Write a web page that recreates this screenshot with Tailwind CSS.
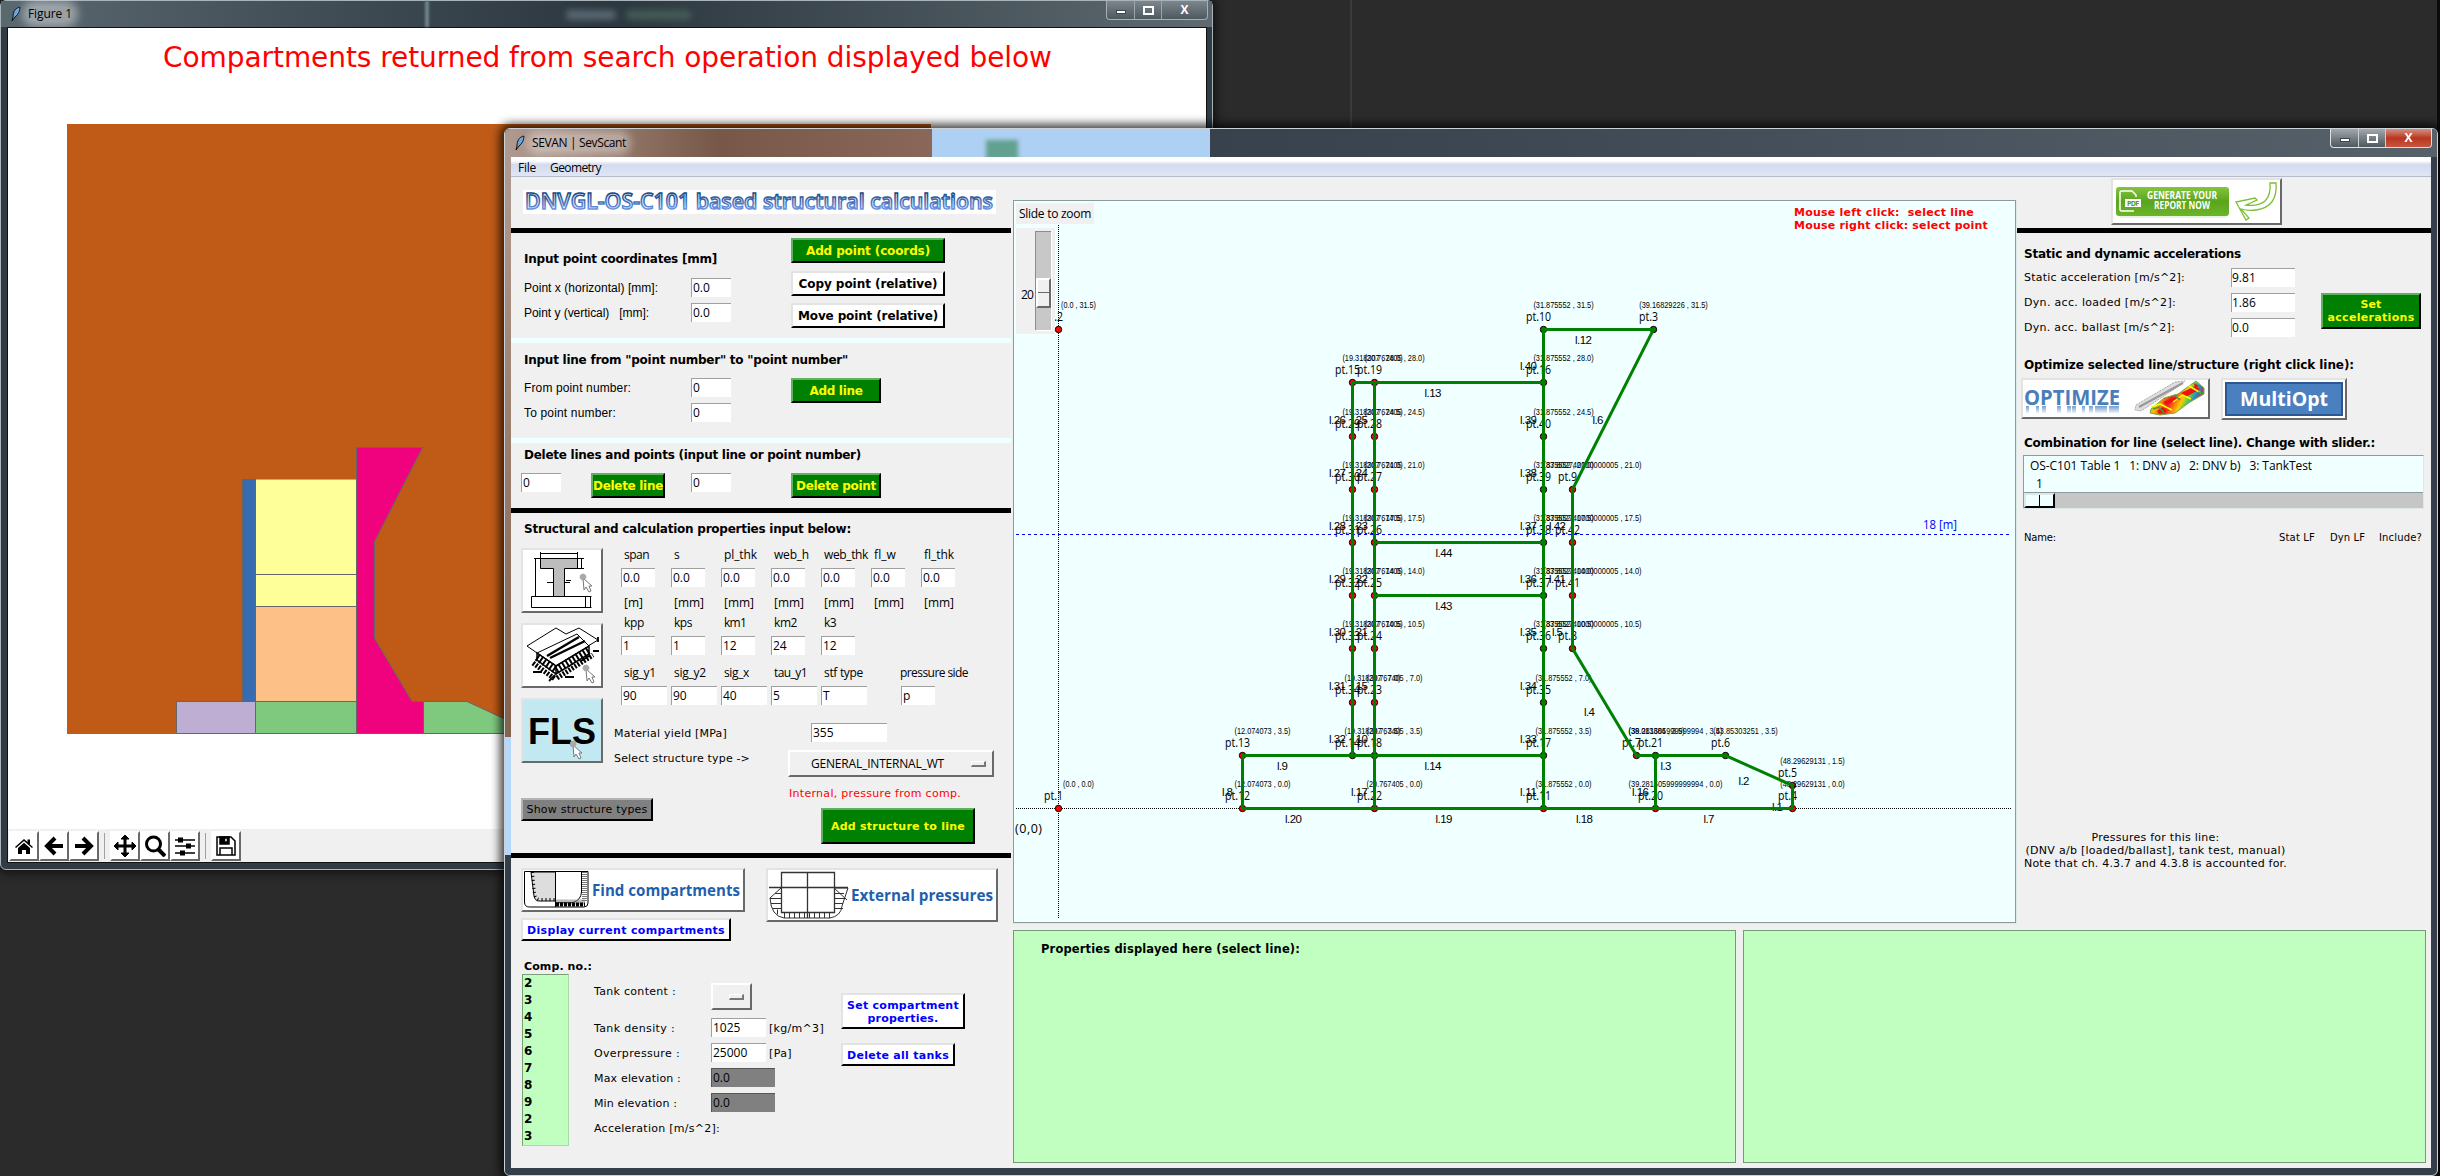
<!DOCTYPE html>
<html lang="en">
<head>
<meta charset="utf-8">
<title>SEVAN | SevScant</title>
<script src="https://cdn.jsdelivr.net/npm/@tailwindcss/browser@4"></script>
</head>
<body class="relative h-[1176px] w-[2440px] overflow-hidden bg-[#2b2b2b] text-black">

<!-- desktop edges -->
<div class="absolute left-[1350px] top-0 h-[128px] w-[2px] bg-[#3a3a3a]"></div>
<div class="absolute right-0 top-0 h-full w-[3px] bg-[#0c0c0c]"></div>

<!-- Figure window -->
<section class="absolute left-0 top-0 flex h-[870px] w-[1213px] flex-col rounded-[6px] border border-[#a9b4ba] bg-[#303b43] px-[6px] shadow-[0_0_10px_3px_rgba(0,0,0,0.6)]">
  <header class="-mx-[6px] flex h-[26px] shrink-0 items-start bg-linear-to-r from-[#5a6870] via-[#2c373f] to-[#5e6a70]">
    <svg class="ml-[9px] mt-[5px]" width="12" height="16" viewBox="0 0 12 16"><path d="M10 1C5 2 3 6 3 11l-1 4 3-4c3-2 5-6 5-10z" fill="#6aa5e0" stroke="#111" stroke-width="1"/></svg>
    <span data-w="44" class="ml-[6px] mt-[5px] whitespace-nowrap rounded-full bg-white/40 font-['Open_Sans',sans-serif] text-[12px] leading-[16px] shadow-[0_0_8px_6px_rgba(255,255,255,0.4)]">Figure 1</span>
    <div class="ml-[353px] h-[26px] w-[4px] bg-[#6f828c] blur-[1px]"></div>
    <div class="ml-[137px] mt-[9px] h-[10px] w-[50px] rounded bg-[#71838f]/60 blur-[3px]"></div>
    <div class="ml-[10px] mt-[9px] h-[10px] w-[65px] rounded bg-[#4f7060]/60 blur-[3px]"></div>
    <div class="ml-auto mr-[4px] flex h-[19px] w-[102px] rounded-b-[4px] border border-t-0 border-[#a6afb4] bg-linear-to-b from-[#7d878d] to-[#4d585f]">
      <div class="flex w-[28px] items-center justify-center border-r border-[#9ca5ab]"><i class="mt-[3px] h-[4px] w-[10px] border border-[#444] bg-white"></i></div>
      <div class="flex w-[27px] items-center justify-center border-r border-[#9ca5ab]"><i class="h-[9px] w-[11px] border-2 border-white"></i></div>
      <b class="flex flex-1 items-center justify-center font-['Open_Sans',sans-serif] text-[12px] leading-none text-white">X</b>
    </div>
  </header>
  <div class="flex min-h-0 w-[1200px] flex-1 flex-col border border-[#111] bg-white">
    <svg class="block shrink-0" width="1198" height="801" viewBox="8 28 1198 801">
      <text x="163" y="67" textLength="889" fill="#ff0000" font-family="DejaVu Sans, sans-serif" font-size="28">Compartments returned from search operation displayed below</text>
      <rect x="67" y="124" width="864" height="610" fill="#bf5b17"/>
      <g stroke="#666" stroke-width="1">
        <path d="M176.500 701.500H255.500V733.500H176.500z" fill="#beaed4"/>
        <path d="M242.500 479V701.500H255.500V479z" fill="#386cb0"/>
        <path d="M255.500 479V606.500H356.500V479z" fill="#ffff99" />
        <path d="M255.500 574.500H356.500"/>
        <path d="M255.500 606.500H356.500V701.500H255.500z" fill="#fdc086"/>
        <path d="M255.500 701.500H356.500V733.500H255.500z" fill="#7fc97f"/>
        <path d="M356.500 447.500H422.500L374.500 541.500V638.500L412 701.500H423.500V733.500H356.500z" fill="#f0027f"/>
        <path d="M423.500 701.500H467L520 726V733.500H423.500z" fill="#7fc97f"/>
      </g>
      <path d="M242 478.500H356" stroke="#bf5b17"/>
    </svg>
    <nav class="flex flex-1 items-start bg-[#f0f0f0] pl-[1px] pt-[2px] [&_i]:mt-[2px] [&_i]:h-[26px] [&_i]:w-px [&_i]:bg-[#a0a0a0] [&_button]:flex [&_button]:size-[30px] [&_button]:items-center [&_button]:justify-center [&_button]:border-2 [&_button]:border-b-[#696969] [&_button]:border-l-white [&_button]:border-r-[#696969] [&_button]:border-t-white [&_button]:bg-white">
      <button><svg width="22" height="20" viewBox="0 0 22 20"><path d="M2 11L11 3l3.500 3V3.500H17V8.500L20 11l-1 1-8-7-8 7z"/><path d="M5 12l6-5.300L17 12v6h-4v-4H9v4H5z"/></svg></button>
      <button><svg width="22" height="20" viewBox="0 0 22 20" fill="none" stroke="#000" stroke-width="4"><path d="M20 10H5M12 2L4 10l8 8"/></svg></button>
      <button><svg width="22" height="20" viewBox="0 0 22 20" fill="none" stroke="#000" stroke-width="4"><path d="M2 10H17M10 2l8 8-8 8"/></svg></button>
      <i class="ml-[5px] mr-[5px]"></i>
      <button><svg width="24" height="24" viewBox="0 0 24 24"><path d="M12 1l4 4h-3v6h6V8l4 4-4 4v-3h-6v6h3l-4 4-4-4h3v-6H5v3l-4-4 4-4v3h6V5H8z" stroke="#000"/></svg></button>
      <button><svg width="22" height="22" viewBox="0 0 22 22" fill="none" stroke="#000" stroke-width="3"><circle cx="9.500" cy="9" r="7"/><path d="M14.500 14.500L21 21" stroke-width="4"/></svg></button>
      <button><svg width="22" height="20" viewBox="0 0 22 20"><path d="M1 4h20M1 10h20M1 17h20" stroke="#000" stroke-width="1.500"/><path d="M4 1.500h5v5H4zM12 7.500h5v5h-5zM6 14.500h5v5H6z"/></svg></button>
      <i class="ml-[5px] mr-[5px]"></i>
      <button><svg width="20" height="20" viewBox="0 0 20 20" fill="none" stroke="#000" stroke-width="1.500"><path d="M1 1H15l4 4V19H1z"/><path d="M4 1h9v7H4z" fill="#000"/><path d="M8.500 2h3v4h-3z" fill="#fff"/><path d="M4 19v-7h12v7"/></svg></button>
    </nav>
  </div>
  <div class="h-[6px] shrink-0"></div>
</section>

<!-- Main window -->
<section class="absolute left-[504px] top-[128px] flex h-[1048px] w-[1934px] flex-col overflow-hidden rounded-[6px] border border-[#ccd2d6] bg-[#333e49] shadow-[0_0_10px_4px_rgba(0,0,0,0.75)]">
  <header class="flex h-[28px] shrink-0 items-start bg-linear-to-r from-[#2a353f] via-[#3c4752] to-[#57616a]">
    <div class="flex h-[28px] w-[427px] items-start bg-linear-to-r from-[#b09a90] via-[#775848] to-[#8a6759]">
      <svg class="ml-[9px] mt-[6px]" width="12" height="16" viewBox="0 0 12 16"><path d="M10 1C5 2 3 6 3 11l-1 4 3-4c3-2 5-6 5-10z" fill="#6aa5e0" stroke="#111" stroke-width="1"/></svg>
      <span data-w="94" class="ml-[6px] mt-[6px] whitespace-nowrap rounded-full bg-white/35 font-['Open_Sans',sans-serif] text-[12px] leading-[16px] shadow-[0_0_8px_5px_rgba(255,255,255,0.35)]">SEVAN | SevScant</span>
    </div>
    <div class="h-[28px] w-[278px] overflow-hidden bg-[#aed0f3] pl-[54px] pt-[11px]"><div class="h-[20px] w-[32px] bg-[#62a08f] blur-[2px]"></div></div>
    <div class="ml-auto mr-[5px] flex h-[19px] w-[102px] rounded-b-[4px] border border-t-0 border-[#dfe3e6] bg-linear-to-b from-[#a2a9ae] to-[#4d585f]">
      <div class="flex w-[28px] items-center justify-center border-r border-[#ccd0d3]"><i class="mt-[3px] h-[4px] w-[10px] border border-[#444] bg-white"></i></div>
      <div class="flex w-[27px] items-center justify-center border-r border-[#ccd0d3]"><i class="h-[9px] w-[11px] border-2 border-white"></i></div>
      <b class="flex flex-1 items-center justify-center rounded-br-[4px] bg-linear-to-b from-[#d28f80] via-[#b8351f] to-[#c9553f] font-['Open_Sans',sans-serif] text-[12px] leading-none text-white">X</b>
    </div>
  </header>
  <div class="flex min-h-0 flex-1">
    <div class="h-full w-[6px] shrink-0 bg-linear-to-b from-[#b09a90] from-0% via-[#84634f] via-55% to-[#84634f] to-58%"><div class="h-[580px]"></div><div class="h-[118px] bg-[#b5d7fb]"></div><div class="h-[340px] bg-[#333e49]"></div></div>
    <main class="flex h-[1011px] w-[1920px] shrink-0 flex-col bg-[#f0f0f0]">
      <nav class="flex h-[20px] shrink-0 items-center border-b border-[#b6bccc] bg-linear-to-b from-white from-20% via-[#d4dbee] via-40% to-[#e1e6f6] pt-[3px] font-['Open_Sans',sans-serif] text-[12px] leading-none whitespace-nowrap">
        <span data-w="18" class="ml-[7px]">File</span><span data-w="51" class="ml-[14px]">Geometry</span>
      </nav>
      <div class="flex min-h-0 flex-1">

        <!-- input column -->
        <div class="flex w-[502px] shrink-0 flex-col whitespace-nowrap font-['Open_Sans',sans-serif] text-[12px] leading-none [&_button]:flex [&_button]:shrink-0 [&_button]:items-center [&_button]:justify-center [&_h2]:flex [&_h2]:h-[20px] [&_h2]:items-center [&_h2]:pt-[2px] [&_h2]:font-['DejaVu_Sans'] [&_h2]:text-[12px] [&_h2]:font-bold [&_label]:block [&_label]:h-[16px] [&_label]:shrink-0 [&_label]:leading-[17px] [&_output]:flex [&_output]:h-[19px] [&_output]:shrink-0 [&_output]:items-center [&_output]:border-l-[1.500px] [&_output]:border-t-[1.500px] [&_output]:border-[#a0a0a0] [&_output]:bg-white [&_output]:pl-[1px]">
          <div class="h-[51px] pl-[12px] pt-[13px]">
            <svg class="block bg-white" width="473" height="24" viewBox="0 0 473 24"><defs><linearGradient id="wa" x1="0" y1="0" x2="0" y2="1"><stop offset="0.200" stop-color="#123f7c"/><stop offset="0.850" stop-color="#6f98e8"/></linearGradient></defs><text x="2" y="18.500" textLength="468" lengthAdjust="spacingAndGlyphs" font-family="Open Sans, sans-serif" font-weight="600" font-size="21.500" fill="#eef3fc" stroke="url(#wa)" stroke-width="1.500">DNVGL-OS-C101 based structural calculations</text></svg>
          </div>
          <div class="h-[5px] w-[500px] bg-black"></div>

          <div class="flex h-[105px] font-['Liberation_Sans',sans-serif]">
            <div class="w-[280px] pl-[13px] pt-[15px]">
              <h2><span data-w="193">Input point coordinates [mm]</span></h2>
              <div class="mt-[10px] flex items-center"><label class="w-[167px]"><span data-w="134">Point x (horizontal) [mm]:</span></label><output class="w-[40px] font-['Open_Sans']">0.0</output></div>
              <div class="mt-[6px] flex items-center"><label class="w-[167px] whitespace-pre"><span data-w="125">Point y (vertical)   [mm]:</span></label><output class="w-[40px] font-['Open_Sans']">0.0</output></div>
            </div>
            <div class="flex flex-col pt-[5px] font-['DejaVu_Sans'] text-[12px] font-bold">
              <button class="h-[25px] w-[154px] border-2 border-b-black border-l-[#5fb25f] border-r-black border-t-[#5fb25f] bg-[#008000] text-[#ffff00]"><span data-w="124">Add point (coords)</span></button>
              <button class="mt-[8px] h-[25px] w-[154px] border-2 border-b-black border-l-[#e3e3e3] border-r-black border-t-[#e3e3e3] bg-white"><span data-w="139">Copy point (relative)</span></button>
              <button class="mt-[7px] h-[25px] w-[154px] border-2 border-b-black border-l-[#e3e3e3] border-r-black border-t-[#e3e3e3] bg-white"><span data-w="140">Move point (relative)</span></button>
            </div>
          </div>
          <div class="h-[5px] w-[500px] bg-[#f0ffff]"></div>

          <div class="flex h-[95px] font-['Liberation_Sans',sans-serif]">
            <div class="w-[280px] pl-[13px] pt-[6px]">
              <h2><span data-w="324">Input line from "point number" to "point number"</span></h2>
              <div class="mt-[9px] flex items-center"><label class="w-[167px]"><span data-w="107">From point number:</span></label><output class="w-[40px] font-['Open_Sans']">0</output></div>
              <div class="mt-[6px] flex items-center"><label class="w-[167px]"><span data-w="92">To point number:</span></label><output class="w-[40px] font-['Open_Sans']">0</output></div>
            </div>
            <button class="mt-[35px] h-[25px] w-[90px] border-2 border-b-black border-l-[#5fb25f] border-r-black border-t-[#5fb25f] bg-[#008000] font-['DejaVu_Sans'] text-[12px] font-bold text-[#ffff00]"><span data-w="53">Add line</span></button>
          </div>
          <div class="h-[5px] w-[500px] bg-[#f0ffff]"></div>

          <div class="h-[65px] pt-px">
            <h2 class="pl-[13px]"><span data-w="337">Delete lines and points (input line or point number)</span></h2>
            <div class="mt-[9px] flex items-start pl-[10px]">
              <output class="mr-[30px] w-[40px]">0</output>
              <button class="mr-[26px] h-[25px] w-[74px] border-2 border-b-black border-l-[#5fb25f] border-r-black border-t-[#5fb25f] bg-[#008000] font-['DejaVu_Sans'] text-[12px] font-bold text-[#ffff00]"><span data-w="70">Delete line</span></button>
              <output class="mr-[60px] w-[40px]">0</output>
              <button class="h-[25px] w-[90px] border-2 border-b-black border-l-[#5fb25f] border-r-black border-t-[#5fb25f] bg-[#008000] font-['DejaVu_Sans'] text-[12px] font-bold text-[#ffff00]"><span data-w="80">Delete point</span></button>
            </div>
          </div>
          <div class="h-[5px] w-[500px] bg-black"></div>

          <div class="h-[340px] pt-[5px]">
            <h2 class="pl-[13px]"><span data-w="327">Structural and calculation properties input below:</span></h2>
            <div class="flex">
              <div class="flex w-[103px] shrink-0 flex-col pl-[10px] pt-[10px]">
                <button class="h-[65px] w-[82px] border-2 border-b-[#696969] border-l-[#e3e3e3] border-r-[#696969] border-t-[#e3e3e3] bg-white">
                  <svg width="78" height="61" viewBox="0 0 78 61" fill="none" stroke="#000"><path d="M17.500 8.500H54.500V18.500H41.500V46.500H30.500V18.500H17.500z" fill="#bdbdbd"/><path d="M8.500 46.500H68.500M8.500 57.500H68.500M8.500 46.500V57.500M62.500 46.500V57.500M67.500 46.500V57.500M17.500 2V8M54.500 2V8M17.500 3.500H54.500M11 8.500H61M12.500 8V46M58.500 8V18.500M54 18.500H61M24 32.500h6M41 32.500h6M43 30.500h5"/><path d="M60 28l1 12 2-3 3 5 2-1-2-5h3z" fill="#fff" stroke="#777"/><circle cx="60" cy="27" r="3" fill="#aaa" stroke="#999" stroke-dasharray="1 1"/></svg>
                </button>
                <button class="mt-[10px] h-[65px] w-[82px] border-2 border-b-[#696969] border-l-[#e3e3e3] border-r-[#696969] border-t-[#e3e3e3] bg-white">
                  <svg width="78" height="61" viewBox="0 0 78 61" fill="none" stroke="#000"><path d="M4 21L33 3l10 6M4 21l10 7M43 9L56 3l19 12-10 6"/><path d="M14 28L54 9l12 12-33 20z" fill="#fff"/><path d="M14 28l19 13v8L14 35zM33 41l33-20v8L33 49z" stroke-width="1.500"/><path d="M24 31L56 12M27 33L62 16" stroke-width="2.500"/><path d="M14 32l19 13M33 45l33-20" stroke-width="8" stroke-dasharray="2 2"/><path d="M10 38l22 16M34 53l36-23" stroke-width="5" stroke-dasharray="2 1.500"/><path d="M10 47h9M58 36l8-5M26 56l6-6M42 52h9M70 26h6M75 12v5" stroke-width="1.800"/><path d="M63 44l1 12 2-3 3 5 2-1-2-5h3z" fill="#fff" stroke="#777"/><circle cx="63" cy="43" r="3" fill="#aaa" stroke="#999" stroke-dasharray="1 1"/></svg>
                </button>
                <button class="mt-[10px] h-[65px] w-[82px] border-2 border-b-[#696969] border-l-[#e3e3e3] border-r-[#696969] border-t-[#e3e3e3] bg-[#c2e9f2]">
                  <svg width="78" height="61" viewBox="0 0 78 61"><text x="5" y="43.500" textLength="68" lengthAdjust="spacingAndGlyphs" font-family="Liberation Sans, sans-serif" font-weight="bold" font-size="37">FLS</text><path d="M50 45l1 12 2-3 3 5 2-1-2-5h3z" fill="#fff" stroke="#777"/><circle cx="50" cy="44" r="3" fill="#aaa" stroke="#999" stroke-dasharray="1 1"/></svg>
                </button>
                <button class="mt-[35px] h-[23px] w-[132px] border-2 border-b-black border-l-[#b4b4b4] border-r-black border-t-[#b4b4b4] bg-[#808080] font-['DejaVu_Sans'] text-[11px]"><span data-w="121">Show structure types</span></button>
              </div>
              <div class="ml-[10px] w-0 shrink-0 grow pt-[8px] text-[12px]">
                <div class="flex [&_label]:w-[50px]"><label><span data-w="25">span</span></label><label>s</label><label><span data-w="33">pl_thk</span></label><label><span data-w="35">web_h</span></label><label><span data-w="44">web_thk</span></label><label><span data-w="22">fl_w</span></label><label><span data-w="30">fl_thk</span></label></div>
                <div class="-ml-[3px] mt-[6px] flex gap-[16px] [&_output]:w-[34px]"><output>0.0</output><output>0.0</output><output>0.0</output><output>0.0</output><output>0.0</output><output>0.0</output><output>0.0</output></div>
                <div class="mt-[7px] flex [&_label]:w-[50px]"><label><span data-w="19">[m]</span></label><label><span data-w="30">[mm]</span></label><label><span data-w="30">[mm]</span></label><label><span data-w="30">[mm]</span></label><label><span data-w="30">[mm]</span></label><label><span data-w="30">[mm]</span></label><label><span data-w="30">[mm]</span></label></div>
                <div class="mt-[4px] flex [&_label]:w-[50px]"><label><span data-w="20">kpp</span></label><label><span data-w="18">kps</span></label><label><span data-w="22">km1</span></label><label><span data-w="23">km2</span></label><label><span data-w="12">k3</span></label></div>
                <div class="-ml-[3px] mt-[6px] flex gap-[16px] [&_output]:w-[34px]"><output>1</output><output>1</output><output>12</output><output>24</output><output>12</output></div>
                <div class="mt-[9px] flex [&_label]:w-[50px]"><label><span data-w="32">sig_y1</span></label><label><span data-w="32">sig_y2</span></label><label><span data-w="25">sig_x</span></label><label><span data-w="33">tau_y1</span></label><label><span data-w="39">stf type</span></label><label class="ml-[26px]"><span data-w="68">pressure side</span></label></div>
                <div class="-ml-[3px] mt-[6px] flex gap-[4px]"><output class="w-[46px]">90</output><output class="w-[46px]">90</output><output class="w-[46px]">40</output><output class="w-[46px]">5</output><output class="w-[46px]">T</output><output class="ml-[30px] w-[34px]">p</output></div>
                <div class="-ml-[10px] mt-[18px] flex items-center"><label class="w-[197px] font-['DejaVu_Sans'] text-[11px]"><span data-w="113">Material yield [MPa]</span></label><output class="w-[76px]">355</output></div>
                <div class="-ml-[10px] mt-[8px] flex items-start"><label class="w-[174px] font-['DejaVu_Sans'] text-[11px]"><span data-w="136">Select structure type -&gt;</span></label>
                  <div class="flex h-[27px] w-[206px] shrink-0 items-center border-2 border-b-[#696969] border-l-[#fff] border-r-[#696969] border-t-[#fff] pl-[21px]"><span data-w="133">GENERAL_INTERNAL_WT</span><i class="ml-[27px] h-[6px] w-[15px] border-b-2 border-l border-r-2 border-t border-b-[#777] border-l-white border-r-[#777] border-t-white"></i></div>
                </div>
                <label class="ml-[165px] mt-[8px] font-['DejaVu_Sans'] text-[11px] text-[#ff0000]"><span data-w="172">Internal, pressure from comp.</span></label>
                <button class="ml-[197px] mt-[7px] h-[36px] w-[154px] border-2 border-b-black border-l-[#5fb25f] border-r-black border-t-[#5fb25f] bg-[#008000] font-['DejaVu_Sans'] text-[11px] font-bold text-[#ffff00]"><span data-w="134">Add structure to line</span></button>
              </div>
            </div>
          </div>
          <div class="h-[5px] w-[500px] shrink-0 bg-black"></div>

          <div class="flex h-[98px] shrink-0 pl-[10px] pt-[10px]">
            <div class="w-[245px]">
              <button class="h-[44px] w-[224px] border-2 border-b-[#696969] border-l-[#e3e3e3] border-r-[#696969] border-t-[#e3e3e3] bg-white">
                <svg width="220" height="40" viewBox="0 0 220 40" fill="none" stroke="#000"><path d="M1.500 1.500V32q0 5 5 5H61q4 0 4-4V1.500z"/><path d="M8 2l3 24q1 5 5 5H32.500V2z" fill="#ddd"/><path d="M32.500 1.500V37M32.500 32.500H50Q58 30 58.500 22V2"/><path d="M9.500 2l2 22q1 5 5 5.500H32" stroke-width="3" stroke-dasharray="1 3"/><path d="M61.500 2V32H33" stroke="#777" stroke-width="5" stroke-dasharray="1 1"/><path d="M33 34.500H62" stroke-width="4" stroke-dasharray="3 1"/><text x="69" y="25.500" textLength="148" lengthAdjust="spacingAndGlyphs" font-family="Open Sans, sans-serif" font-weight="bold" font-size="15.500" fill="#1f5fae" stroke="none">Find compartments</text></svg>
              </button>
              <button class="mt-[6px] h-[23px] w-[210px] border-2 border-b-black border-l-[#e3e3e3] border-r-black border-t-[#e3e3e3] bg-white pt-px font-['DejaVu_Sans'] text-[11px] font-bold text-[#0000ff]"><span data-w="198">Display current compartments</span></button>
            </div>
            <button class="h-[54px] w-[232px] border-2 border-b-[#696969] border-l-[#e3e3e3] border-r-[#696969] border-t-[#e3e3e3] bg-white">
              <svg width="228" height="50" viewBox="0 0 228 50" fill="none" stroke="#333"><path d="M13.500 2.500H66.500V42.500H13.500zM39.500 2.500V48M1 17.500H80" stroke-width="1.300"/><path d="M13 18L2 28Q3 46 16 48H62Q73 46 74 36L80 18H66L79 30"/><path d="M2 28.500h11M3 33.500h10M5 38.500h8M67 23.500h9M67 28.500h10M67 33.500h8M67 38.500h8M7 23.500h6"/><path d="M9 42l4 0M16 45.500H62" stroke-width="5" stroke-dasharray="1 4"/><text x="83" y="31" textLength="142" lengthAdjust="spacingAndGlyphs" font-family="Open Sans, sans-serif" font-weight="bold" font-size="15.500" fill="#1f5fae" stroke="none">External pressures</text></svg>
            </button>
          </div>
          <div class="flex h-[18px] shrink-0 items-center pl-[13px] pt-[2px] font-['DejaVu_Sans'] text-[11px] font-bold"><span data-w="68">Comp. no.:</span></div>
          <div class="flex items-start font-['DejaVu_Sans'] text-[11px]">
            <div class="ml-[11px] mr-[25px] h-[172px] w-[47px] shrink-0 border border-b-[#a6dba6] border-l-[#77a077] border-r-[#a6dba6] border-t-[#77a077] bg-[#c1ffc1] pl-px text-[12px] font-bold leading-[17px]"><div>2</div><div>3</div><div>4</div><div>5</div><div>6</div><div>7</div><div>8</div><div>9</div><div>2</div><div>3</div></div>
            <div class="w-[247px] shrink-0 pt-[9px] [&_label]:w-[117px]">
              <div class="flex h-[27px]"><label><span data-w="82">Tank content :</span></label><div class="flex w-[41px] items-center border-2 border-b-[#696969] border-l-[#fff] border-r-[#696969] border-t-[#fff] pl-[16px]"><i class="h-[6px] w-[15px] border-b-2 border-l border-r-2 border-t border-b-[#777] border-l-white border-r-[#777] border-t-white"></i></div></div>
              <div class="mt-[8px] flex items-center"><label><span data-w="81">Tank density :</span></label><output class="w-[55px] font-['Open_Sans'] text-[12px]">1025</output><span class="ml-[3px] pt-px" data-w="55">[kg/m^3]</span></div>
              <div class="mt-[6px] flex items-center"><label><span data-w="86">Overpressure :</span></label><output class="w-[55px] font-['Open_Sans'] text-[12px]">25000</output><span class="ml-[3px] pt-px" data-w="23">[Pa]</span></div>
              <div class="mt-[6px] flex items-center"><label><span data-w="87">Max elevation :</span></label><output class="w-[64px] border-l-[#555]! border-t-[#555]! bg-[#808080]! font-['Open_Sans'] text-[12px]">0.0</output></div>
              <div class="mt-[6px] flex items-center"><label><span data-w="83">Min elevation :</span></label><output class="w-[64px] border-l-[#555]! border-t-[#555]! bg-[#808080]! font-['Open_Sans'] text-[12px]">0.0</output></div>
              <div class="mt-[8px] flex items-center"><label><span data-w="126">Acceleration [m/s^2]:</span></label></div>
            </div>
            <div class="pt-[19px] font-bold text-[#0000ff]">
              <button class="h-[36px] w-[124px] flex-col border-2 border-b-black border-l-[#e3e3e3] border-r-black border-t-[#e3e3e3] bg-white pt-px leading-[13px]"><span data-w="112">Set compartment</span><span data-w="71">properties.</span></button>
              <button class="mt-[14px] h-[23px] w-[114px] border-2 border-b-black border-l-[#e3e3e3] border-r-black border-t-[#e3e3e3] bg-white pt-px"><span data-w="102">Delete all tanks</span></button>
            </div>
          </div>
        </div>

        <!-- drawing area, results and load panel -->
        <div class="flex min-w-0 flex-1 flex-col">
          <div class="flex h-[753px] shrink-0">
            <div class="w-[1003px] shrink-0 pt-[23px]">
              <div class="relative h-[723px] w-[1003px] border border-[#8b9c9c] bg-[#f0ffff] shadow-[1px_1px_0_#dbe9e9]">
                <svg id="canvas" class="absolute -left-px -top-px" width="1003" height="723" viewBox="1013 200 1003 723"></svg>
                <div class="absolute left-[2px] top-[2px] flex h-[21px] w-[78px] items-center bg-[#f0f0f0] pl-[3px] pt-px font-['Open_Sans',sans-serif] text-[12px] leading-none whitespace-nowrap"><span data-w="72">Slide to zoom</span></div>
                <div class="absolute left-[2px] top-[27px] flex h-[106px] w-[39px] bg-[#f0f0f0] pl-[5px] pt-[3px] font-['Open_Sans',sans-serif] text-[12px] leading-none">
                  <span class="mt-[58px] w-[14px]" data-w="12">20</span>
                  <div class="h-[99px] w-[16px] border-l border-t border-[#8c8c8c] bg-[#c8c8c8] pt-[46px] shadow-[1px_1px_0_#fff]"><div class="h-[30px] w-[15px] border-2 border-b-[#696969] border-l-white border-r-[#696969] border-t-white bg-[#f0f0f0]"><div class="h-[13px] border-b border-[#696969]"></div></div></div>
                </div>
                <div class="absolute left-[780px] top-[5px] font-['DejaVu_Sans',sans-serif] text-[11px] font-bold leading-[13px] whitespace-pre text-[#ff0000]"><div><span data-w="180">Mouse left click:  select line</span></div><div><span data-w="194">Mouse right click: select point</span></div></div>
              </div>
            </div>

            <div class="flex w-[415px] flex-col whitespace-nowrap font-['DejaVu_Sans',sans-serif] text-[11px] leading-none [&_h2]:flex [&_h2]:h-[20px] [&_h2]:items-center [&_h2]:pt-[2px] [&_h2]:text-[12px] [&_h2]:font-bold [&_output]:flex [&_output]:h-[19px] [&_output]:w-[64px] [&_output]:items-center [&_output]:border-l-[1.500px] [&_output]:border-t-[1.500px] [&_output]:border-[#a0a0a0] [&_output]:bg-white [&_output]:font-['Open_Sans'] [&_output]:text-[12px]">
              <div class="h-[51px] pl-[95px] pt-px">
                <button class="h-[47px] w-[171px] border-2 border-b-[#696969] border-l-[#e3e3e3] border-r-[#696969] border-t-[#e3e3e3] bg-white">
                  <svg width="167" height="43" viewBox="0 0 167 43"><defs><linearGradient id="gr" x1="0" y1="0" x2="0" y2="1"><stop offset="0" stop-color="#86c440"/><stop offset=".5" stop-color="#5aa51c"/><stop offset="1" stop-color="#6cb52a"/></linearGradient></defs><rect x="3" y="7" width="113" height="29" rx="3" fill="url(#gr)"/><path d="M7 37h106" stroke="#d3e6c0"/><path d="M23 17V15l-4-4H8.500q-1.500 0-1.500 1.500V29q0 2 1.500 2H21" fill="none" stroke="#fff" stroke-width="1.500"/><rect x="12" y="19" width="16" height="8" fill="#fff"/><g font-family="Open Sans, sans-serif" font-weight="bold"><text x="14" y="26" font-size="7" textLength="12" fill="#4c9a12">PDF</text><g font-size="10" fill="#fff"><text x="34" y="18.500" textLength="70" lengthAdjust="spacingAndGlyphs">GENERATE YOUR</text><text x="41" y="29" textLength="56" lengthAdjust="spacingAndGlyphs">REPORT NOW</text></g></g><path d="M157 3h6q2 24-20 27-8 1-15-1l8 9-3 2-10-18 19-4 2 2-11 5q26 3 24-22z" fill="#fff" stroke="#7cc034" stroke-width="1.300"/></svg>
                </button>
              </div>
              <div class="h-[5px] bg-black"></div>
              <div class="pl-[8px] pt-[10px]">
                <h2><span data-w="217">Static and dynamic accelerations</span></h2>
                <div class="mt-[5px] flex">
                  <div class="flex w-[297px] flex-col gap-[6px] [&>div]:flex [&>div]:items-center [&_span]:mr-auto [&_output]:mr-[26px]">
                    <div><span data-w="161">Static acceleration [m/s^2]:</span><output>9.81</output></div>
                    <div><span data-w="152">Dyn. acc. loaded [m/s^2]:</span><output>1.86</output></div>
                    <div><span data-w="151">Dyn. acc. ballast [m/s^2]:</span><output>0.0</output></div>
                  </div>
                  <button class="mt-[25px] flex h-[36px] w-[100px] flex-col items-center justify-center border-2 border-b-black border-l-[#5fb25f] border-r-black border-t-[#5fb25f] bg-[#008000] font-bold leading-[13px] text-[#ffff00]"><span data-w="21">Set</span><span data-w="87">accelerations</span></button>
                </div>
                <h2 class="mt-[17px]"><span data-w="330">Optimize selected line/structure (right click line):</span></h2>
                <div class="-ml-[3px] mt-[4px] flex items-start gap-[11px]">
                  <button class="h-[41px] w-[189px] border-2 border-b-[#696969] border-l-[#e3e3e3] border-r-[#696969] border-t-[#e3e3e3] bg-white">
                    <svg width="185" height="37" viewBox="0 0 185 37"><defs><linearGradient id="ht" x1="0" y1="0" x2="1" y2=".3"><stop offset="0" stop-color="#e22"/><stop offset=".15" stop-color="#6c4"/><stop offset=".3" stop-color="#fb0"/><stop offset=".5" stop-color="#e22"/><stop offset=".7" stop-color="#fc0"/><stop offset=".8" stop-color="#5c5"/><stop offset=".9" stop-color="#28c"/><stop offset="1" stop-color="#e22"/></linearGradient><linearGradient id="fade" x1="0" y1="0" x2="0" y2="1"><stop offset="0" stop-color="#4a7ebb" stop-opacity=".75"/><stop offset="1" stop-color="#4a7ebb" stop-opacity=".1"/></linearGradient></defs><text x="1" y="25" textLength="96" lengthAdjust="spacingAndGlyphs" font-family="Open Sans, sans-serif" font-weight="bold" font-size="22" fill="#4a7ebb">OPTIMIZE</text><g fill="url(#fade)"><path d="M3 26h3v7H3zM13 26h3v7h-3zM19 26h4v7h-4zM34 26h4v7h-4zM44 26h4v7h-4zM49 26h4v7h-4zM59 26h3v7h-3zM66 26h4v7h-4zM72 26h12v7H72zM86 26h10v7H86z"/></g><path d="M113 25L152 2l10-1-9 7-35 23-6-1z" fill="#ddd" stroke="#aaa" stroke-dasharray="2 1"/><path d="M116 27L160 3" stroke="#999" stroke-width="2"/><path d="M128 29l13-11 14-4 18-13 8 7v6l-14 8-15 11-15 2-10-2z" fill="url(#ht)" stroke="#7a4" stroke-width="1"/><path d="M140 22l12-5 6 1-15 7zM158 13l14-7 5 3-14 8zM134 31l6-4 4 5-8 2zM171 3l5 3-4 2z" fill="#e11"/><path d="M128 27l9-3 12 6M150 22l10-7 8 4M166 6l12 7" stroke="#ff0" fill="none" stroke-width="1.500"/><path d="M130 29l6-2 5 6M151 15l6 5M175 12l5 1" stroke="#2a4" fill="none" stroke-width="1.500"/></svg>
                  </button>
                  <button class="h-[42px] w-[126px] border-2 border-b-[#696969] border-l-[#e3e3e3] border-r-[#696969] border-t-[#e3e3e3] bg-white p-[2px]"><span class="flex h-[34px] items-center justify-center border-2 border-[#2c5790] bg-[#4a7fc0] font-['Open_Sans'] text-[19.500px] font-bold text-white"><span data-w="88">MultiOpt</span></span></button>
                </div>
                <h2 class="mt-[12px]"><span data-w="351">Combination for line (select line). Change with slider.:</span></h2>
              </div>
              <div class="ml-[7px] mt-[3px] h-[54px] w-[401px] border border-b-2 border-b-[#dbe9e9] border-l-[#8b9c9c] border-r-[#dbe9e9] border-t-[#8b9c9c] bg-[#f0ffff] font-['Open_Sans'] text-[12px]">
                <div class="flex h-[20px] items-center whitespace-pre pl-[6px]"><span data-w="282">OS-C101 Table 1   1: DNV a)   2: DNV b)   3: TankTest</span></div>
                <div class="h-[16px] pl-[12px] leading-[16px]">1</div>
                <div class="h-[16px] border-t border-[#8b9c9c] bg-[#c6c6c6]"><div class="flex h-[15px] w-[31px] border-2 border-b-black border-l-[#dbe9e9] border-r-black border-t-[#dbe9e9] bg-[#f0ffff]"><div class="w-[14px] border-r border-black"></div></div></div>
              </div>
              <div class="mt-[24px] flex items-center pl-[8px] text-[10px]"><span data-w="32">Name:</span><span data-w="36" class="ml-[223px]">Stat LF</span><span data-w="35" class="ml-[15px]">Dyn LF</span><span data-w="43" class="ml-[14px]">Include?</span></div>
              <div class="ml-[8px] mt-[288px] w-[263px] text-center leading-[13px]"><div><span data-w="128">Pressures for this line:</span></div><div><span data-w="260">(DNV a/b [loaded/ballast], tank test, manual)</span></div><div><span data-w="263">Note that ch. 4.3.7 and 4.3.8 is accounted for.</span></div></div>
            </div>
          </div>
          <div class="flex gap-[7px]">
            <div class="h-[233px] w-[723px] border border-[#749b74] bg-[#c1ffc1] pl-[27px] pt-[11px] font-['DejaVu_Sans',sans-serif] text-[11.500px] font-bold leading-[14px] whitespace-nowrap"><span data-w="259">Properties displayed here (select line):</span></div>
            <div class="h-[233px] w-[683px] border border-[#749b74] bg-[#c1ffc1]"></div>
          </div>
        </div>
      </div>
    </main>
  </div>
  <div class="h-[6px] shrink-0"></div>
</section>

<script>
// Geometry model: points in metres, lines between point numbers.
const S = 15.2, OX = 1058.5, OY = 808.5;
const A = 19.318307, B = 20.767405, C = 31.875552, D = '33.802740000000005';
const points = {1:[0,0],2:[0,31.5],3:[39.16829226,31.5],4:[48.29629131,0],5:[48.29629131,1.5],6:[43.85303251,3.5],7:[38.013384,3.5],8:[D,10.5],9:[D,21],
10:[C,31.5],11:[C,0],12:[12.074073,0],13:[12.074073,3.5],14:[A,3.5],15:[A,28],16:[C,28],17:[C,3.5],18:[B,3.5],19:[B,28],20:['39.281605999999994',0],21:['39.281605999999994',3.5],
22:[B,0],23:[B,7],24:[B,10.5],25:[B,14],26:[B,17.5],27:[B,21],28:[B,24.5],29:[A,24.5],30:[A,21],31:[A,17.5],32:[A,14],33:[A,10.5],34:[A,7],
35:[C,7],36:[C,10.5],37:[C,14],38:[C,17.5],39:[C,21],40:[C,24.5],41:[D,14],42:[D,17.5]};
const lines = {1:[4,5],2:[5,6],3:[6,7],4:[7,8],5:[8,41],6:[9,3],7:[20,4],8:[12,13],9:[13,14],10:[23,18],11:[17,11],12:[3,10],13:[15,16],14:[14,17],15:[24,23],16:[20,21],17:[18,22],18:[11,20],19:[22,11],20:[12,22],
21:[25,24],22:[26,25],23:[27,26],24:[28,27],25:[19,28],26:[15,29],27:[29,30],28:[30,31],29:[31,32],30:[32,33],31:[33,34],32:[34,14],33:[35,17],34:[36,35],35:[37,36],36:[38,37],37:[39,38],38:[40,39],39:[16,40],40:[10,16],41:[41,42],42:[42,9],43:[25,37],44:[26,38]};
const X = p => Math.floor(OX + S * parseFloat(p[0])) + 0.5, Y = p => Math.round(808 - S * p[1]) + 0.5;
const num = v => typeof v === 'string' ? v : Number.isInteger(v) ? v + '.0' : '' + v;
let dots = '', txt = '', seg = '';
for (const id in points) {
  const p = points[id], x = X(p), y = Y(p), t = `(${num(p[0])} , ${num(p[1])})`;
  const w = t.replace(/\D/g, '').length * 4.2 + 14;
  dots += `<circle cx="${x}" cy="${y}" r="3.2" fill="#f00" stroke="#000"/>`;
  txt += `<text x="${x + 20 - w / 2}" y="${y - 22}" textLength="${w}" lengthAdjust="spacingAndGlyphs" font-size="9" font-family="Liberation Sans, sans-serif">${t}</text>`;
  txt += `<text x="${x - 5}" y="${y - 9}" text-anchor="middle" textLength="${id.length > 1 ? 25 : 19}" lengthAdjust="spacingAndGlyphs" font-size="12.500" font-family="Open Sans, sans-serif">pt.${id}</text>`;
}
for (const id in lines) {
  const [a, b] = lines[id].map(i => points[i]);
  seg += `<path d="M${X(a)} ${Y(a)}L${X(b)} ${Y(b)}"/>`;
  txt += `<text x="${(X(a) + X(b)) / 2 - 15}" y="${(Y(a) + Y(b)) / 2 + 14}" text-anchor="middle" font-size="11.500" textLength="${id.length > 1 ? 17 : 11}" font-family="Liberation Sans, sans-serif">l.${id}</text>`;
}
document.getElementById('canvas').innerHTML =
  `<path d="M1058.500 203V918M1016 808.500H2011" stroke="#000" stroke-dasharray="1 1" fill="none"/>` +
  `<path d="M1016 534.500H2011" stroke="#00f" stroke-dasharray="3 3"/>` +
  `<text x="1923" y="529" textLength="34" lengthAdjust="spacingAndGlyphs" font-size="12.500" font-family="Open Sans, sans-serif" fill="#00f">18 [m]</text>` +
  `<text x="1015" y="833" textLength="27" font-size="12.500" font-family="Open Sans, sans-serif">(0,0)</text>` +
  dots + txt + `<g stroke="#008000" stroke-width="3" fill="none" stroke-linecap="square">${seg}</g>`;

function fit() {
  document.querySelectorAll('[data-w]').forEach(el => {
    el.style.letterSpacing = '0px';
    const r = document.createRange(); r.selectNodeContents(el);
    const n = el.textContent.length, w = r.getBoundingClientRect().width;
    el.style.letterSpacing = ((+el.dataset.w - w) / n).toFixed(3) + 'px';
  });
}
window.addEventListener('load', () => { fit(); document.fonts.ready.then(fit); requestAnimationFrame(fit); });
</script>
</body>
</html>
